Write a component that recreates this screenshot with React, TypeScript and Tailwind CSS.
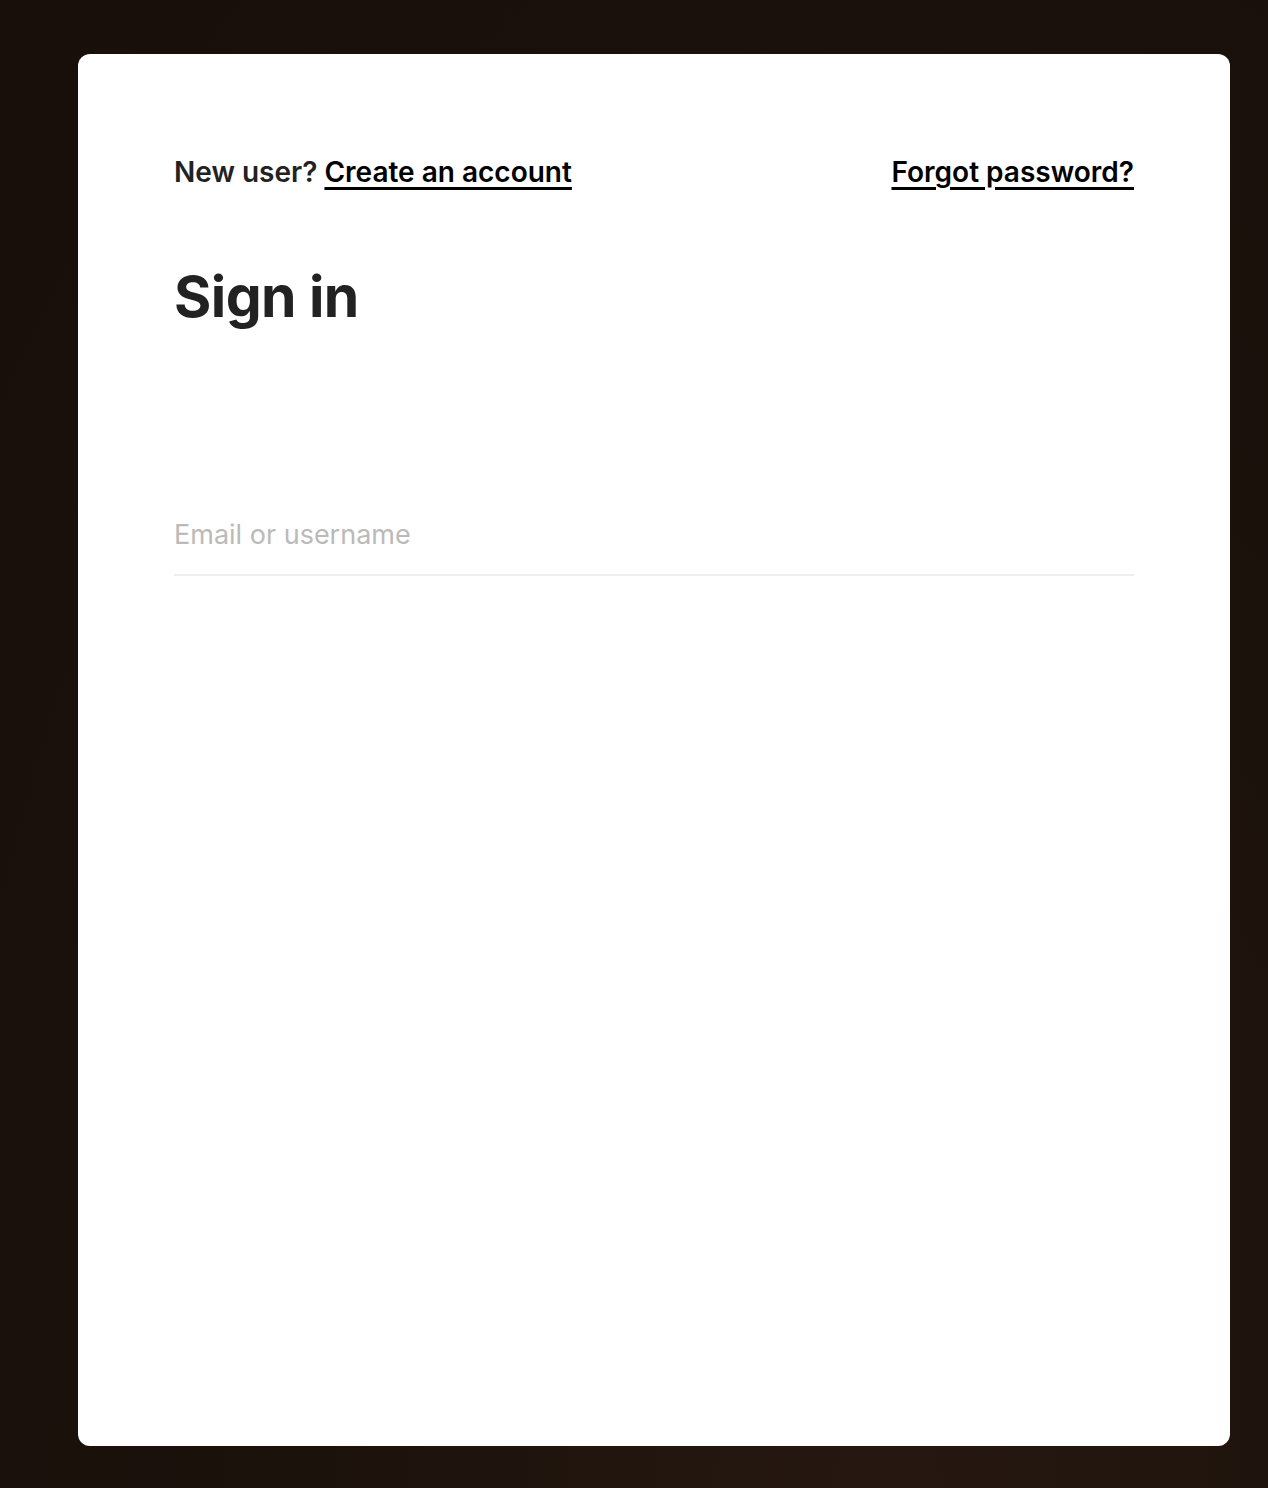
import React from 'react';

export default function App() {
  return (
    <div
      className="min-h-[1488px] flex pt-[54px] pb-[42px] pl-[78px] pr-[38px] bg-[radial-gradient(ellipse_at_70%_100%,#261810_0%,#1c120c_45%,#180f0a_100%)]"
      style={{ fontFamily: 'Inter, "Noto Sans", sans-serif' }}
    >
      <div className="flex-1 bg-white rounded-[12px] px-[96px] pt-[101px] flex flex-col">
        <div className="flex items-center justify-between text-[28px] leading-[34px] font-semibold">
          <p className="text-[#222]">
            New user?{' '}
            <a href="#" className="text-black underline decoration-[3px] underline-offset-[5px]">
              Create an account
            </a>
          </p>
          <a href="#" className="text-black underline decoration-[3px] underline-offset-[5px]">
            Forgot password?
          </a>
        </div>

        <h1 className="mt-[74px] text-[57px] leading-[67px] font-bold text-[#222] tracking-[-0.01em]">Sign in</h1>

        <form className="mt-[189px]" onSubmit={(e) => e.preventDefault()}>
          <input
            type="text"
            placeholder="Email or username"
            className="w-full text-[27px] leading-[32px] pb-[23px] border-b-2 border-[#eeeeee] outline-none text-[#222] placeholder:text-[#bcb9b9] bg-transparent"
          />
        </form>
      </div>
    </div>
  );
}
